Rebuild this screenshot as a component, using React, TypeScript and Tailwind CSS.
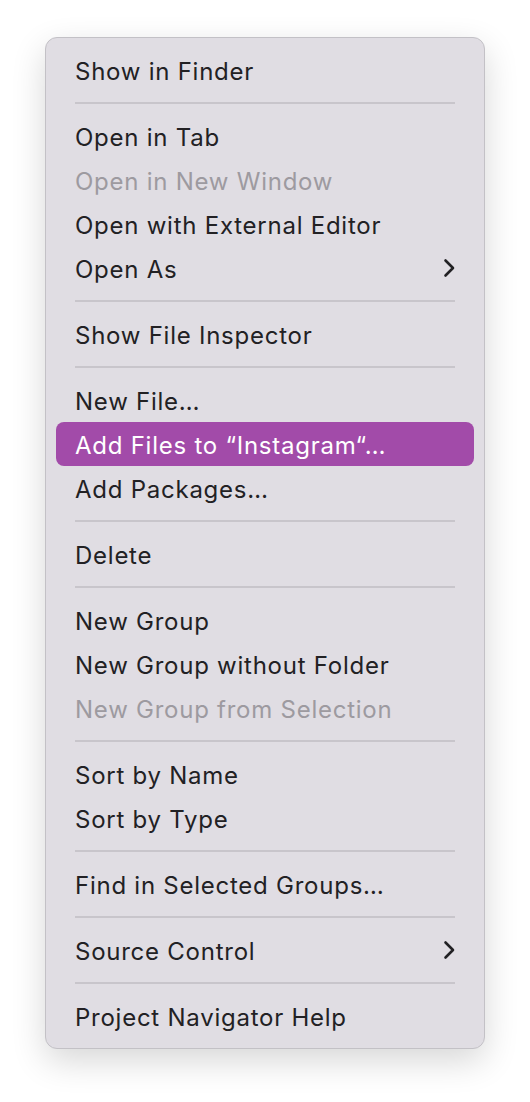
import React from 'react';

type Item =
  | { kind: 'item'; label: string; disabled?: boolean; active?: boolean; submenu?: boolean }
  | { kind: 'sep' };

const items: Item[] = [
  { kind: 'item', label: 'Show in Finder' },
  { kind: 'sep' },
  { kind: 'item', label: 'Open in Tab' },
  { kind: 'item', label: 'Open in New Window', disabled: true },
  { kind: 'item', label: 'Open with External Editor' },
  { kind: 'item', label: 'Open As', submenu: true },
  { kind: 'sep' },
  { kind: 'item', label: 'Show File Inspector' },
  { kind: 'sep' },
  { kind: 'item', label: 'New File…' },
  { kind: 'item', label: 'Add Files to “Instagram“…', active: true },
  { kind: 'item', label: 'Add Packages…' },
  { kind: 'sep' },
  { kind: 'item', label: 'Delete' },
  { kind: 'sep' },
  { kind: 'item', label: 'New Group' },
  { kind: 'item', label: 'New Group without Folder' },
  { kind: 'item', label: 'New Group from Selection', disabled: true },
  { kind: 'sep' },
  { kind: 'item', label: 'Sort by Name' },
  { kind: 'item', label: 'Sort by Type' },
  { kind: 'sep' },
  { kind: 'item', label: 'Find in Selected Groups…' },
  { kind: 'sep' },
  { kind: 'item', label: 'Source Control', submenu: true },
  { kind: 'sep' },
  { kind: 'item', label: 'Project Navigator Help' },
];

function Chevron() {
  return (
    <svg width="14" height="20" viewBox="0 0 14 20" fill="none" className="shrink-0">
      <path d="M3.5 2.5 L11 10 L3.5 17.5" stroke="currentColor" strokeWidth="2.6" strokeLinecap="round" strokeLinejoin="round" />
    </svg>
  );
}

export default function App() {
  return (
    <div className="min-h-[1102px] w-[530px] bg-white pt-[37px] pl-[45px]" style={{ fontFamily: 'Inter, "Noto Sans", sans-serif' }}>
      <div className="w-[440px] rounded-[12px] border border-[#c3c1c6] bg-[#e0dde3] py-[10px] shadow-[0_12px_34px_rgba(0,0,0,0.16)]">
        {items.map((it, i) =>
          it.kind === 'sep' ? (
            <div key={i} className="flex h-[22px] items-center px-[29px]">
              <div className="h-[2px] w-full bg-[#c8c5cb]" />
            </div>
          ) : (
            <div
              key={i}
              className={`mx-[10px] flex h-[44px] items-center justify-between rounded-[8px] pl-[19px] pr-[18px] text-[24px] tracking-[0.75px] ${
                it.active ? 'bg-[#a24ba9] text-white' : it.disabled ? 'text-[#9d9aa0]' : 'text-[#222124]'
              }`}
            >
              <span className="pt-[3px]">{it.label}</span>
              {it.submenu && <Chevron />}
            </div>
          )
        )}
      </div>
    </div>
  );
}
